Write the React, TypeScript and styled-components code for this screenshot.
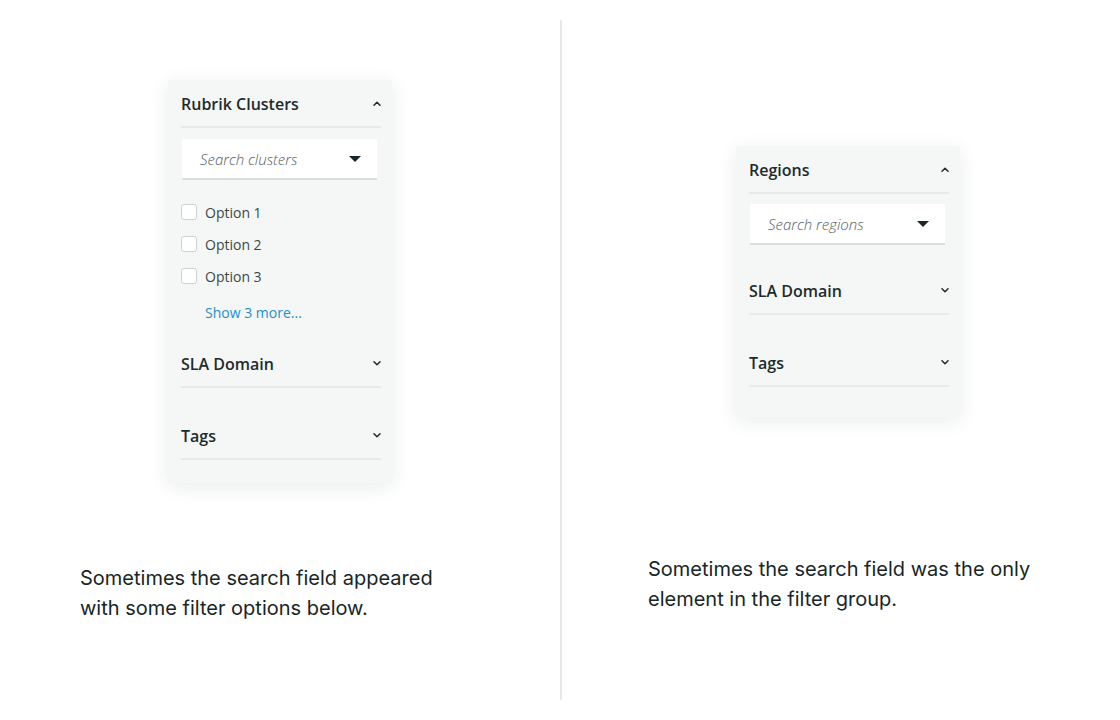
import React from 'react'
import styled, { createGlobalStyle } from 'styled-components'

const GlobalStyle = createGlobalStyle`
  html, body {
    margin: 0;
    padding: 0;
    background: #ffffff;
  }
  * { box-sizing: border-box; }
`

const Page = styled.div`
  display: flex;
  width: 1120px;
  height: 720px;
  background: #ffffff;
`

const Column = styled.div<{ $width?: number; $top: number; $left: number }>`
  ${p => (p.$width ? `width: ${p.$width}px;` : 'flex: 1;')}
  display: flex;
  flex-direction: column;
  align-items: flex-start;
  padding: ${p => p.$top}px 0 0 ${p => p.$left}px;
`

const Divider = styled.div`
  width: 2px;
  margin: 20px 0;
  background: #e6e8e8;
`

const Panel = styled.div<{ $pb: number }>`
  width: 224px;
  margin-left: 88px;
  padding: 0 11px ${p => p.$pb}px 13px;
  background: #f5f7f6;
  box-shadow: 0 4px 18px rgba(20, 40, 40, 0.09);
  display: flex;
  flex-direction: column;
`

const Section = styled.div<{ $gap: number }>`
  margin-top: ${p => p.$gap}px;
  display: flex;
  flex-direction: column;
`

const Header = styled.div<{ $h: number }>`
  height: ${p => p.$h}px;
  display: flex;
  align-items: center;
  justify-content: space-between;
  border-bottom: 2px solid #e7eaea;
  padding-top: 1px;
  font-family: 'Open Sans', 'Noto Sans', sans-serif;
  font-weight: 600;
  font-size: 16px;
  color: #1d2b2b;
`

const Chevron = styled.svg`
  width: 8px;
  height: 5px;
`

const SearchBox = styled.div<{ $mt: number }>`
  margin: ${p => p.$mt}px 4px 0 1px;
  height: 41px;
  background: #ffffff;
  border-bottom: 2px solid #d9dddc;
  border-radius: 2px 2px 0 0;
  display: flex;
  align-items: center;
  justify-content: space-between;
  padding: 0 16px 0 18px;
  font-family: 'Open Sans', 'Noto Sans', sans-serif;
  font-style: italic;
  font-weight: 300;
  font-size: 15px;
  color: #4f5e5e;
`

const Caret = styled.span`
  width: 0;
  height: 0;
  border-left: 6px solid transparent;
  border-right: 6px solid transparent;
  border-top: 6px solid #18262a;
`

const OptionList = styled.div`
  margin-top: 16px;
  display: flex;
  flex-direction: column;
`

const OptionRow = styled.label`
  height: 32px;
  display: flex;
  align-items: center;
  gap: 8px;
  font-family: 'Open Sans', 'Noto Sans', sans-serif;
  font-size: 14px;
  color: #3a4848;
`

const Box = styled.span`
  width: 16px;
  height: 16px;
  border: 1.5px solid #cdd3d1;
  border-radius: 3px;
  background: #ffffff;
`

const ShowMore = styled.a`
  margin: 11px 0 0 24px;
  line-height: 20px;
  font-family: 'Open Sans', 'Noto Sans', sans-serif;
  font-size: 14px;
  color: #1b90cc;
  text-decoration: none;
`

const Caption = styled.p<{ $mt: number }>`
  margin: ${p => p.$mt}px 0 0;
  font-family: Inter, 'Noto Sans', sans-serif;
  font-size: 20px;
  line-height: 30px;
  color: #172626;
`

const ChevronIcon = ({ up }: { up?: boolean }) => (
  <Chevron viewBox="0 0 8 5">
    <path
      d={up ? 'M1 4.2 L4 1.2 L7 4.2' : 'M1 0.8 L4 3.8 L7 0.8'}
      fill="none"
      stroke="#1d2b2b"
      strokeWidth="1.5"
      strokeLinecap="round"
      strokeLinejoin="round"
    />
  </Chevron>
)

const options = ['Option 1', 'Option 2', 'Option 3']

const App: React.FunctionComponent = () => {
  return (
    <>
      <GlobalStyle />
      <Page>
        <Column $width={560} $top={80} $left={80}>
          <Panel $pb={23}>
            <Section $gap={0}>
              <Header $h={48}>
                Rubrik Clusters
                <ChevronIcon up />
              </Header>
              <SearchBox $mt={11}>
                Search clusters
                <Caret />
              </SearchBox>
              <OptionList>
                {options.map(o => (
                  <OptionRow key={o}>
                    <Box />
                    {o}
                  </OptionRow>
                ))}
              </OptionList>
              <ShowMore>Show 3 more...</ShowMore>
            </Section>
            <Section $gap={17}>
              <Header $h={48}>
                SLA Domain
                <ChevronIcon />
              </Header>
            </Section>
            <Section $gap={24}>
              <Header $h={48}>
                Tags
                <ChevronIcon />
              </Header>
            </Section>
          </Panel>
          <Caption $mt={80}>
            Sometimes the search field appeared
            <br />
            with some filter options below.
          </Caption>
        </Column>
        <Divider />
        <Column $top={146} $left={86}>
          <Panel $pb={30}>
            <Section $gap={0}>
              <Header $h={48}>
                Regions
                <ChevronIcon up />
              </Header>
              <SearchBox $mt={10}>
                Search regions
                <Caret />
              </SearchBox>
            </Section>
            <Section $gap={22}>
              <Header $h={48}>
                SLA Domain
                <ChevronIcon />
              </Header>
            </Section>
            <Section $gap={24}>
              <Header $h={48}>
                Tags
                <ChevronIcon />
              </Header>
            </Section>
          </Panel>
          <Caption $mt={137}>
            Sometimes the search field was the only
            <br />
            element in the filter group.
          </Caption>
        </Column>
      </Page>
    </>
  )
}

export default App
